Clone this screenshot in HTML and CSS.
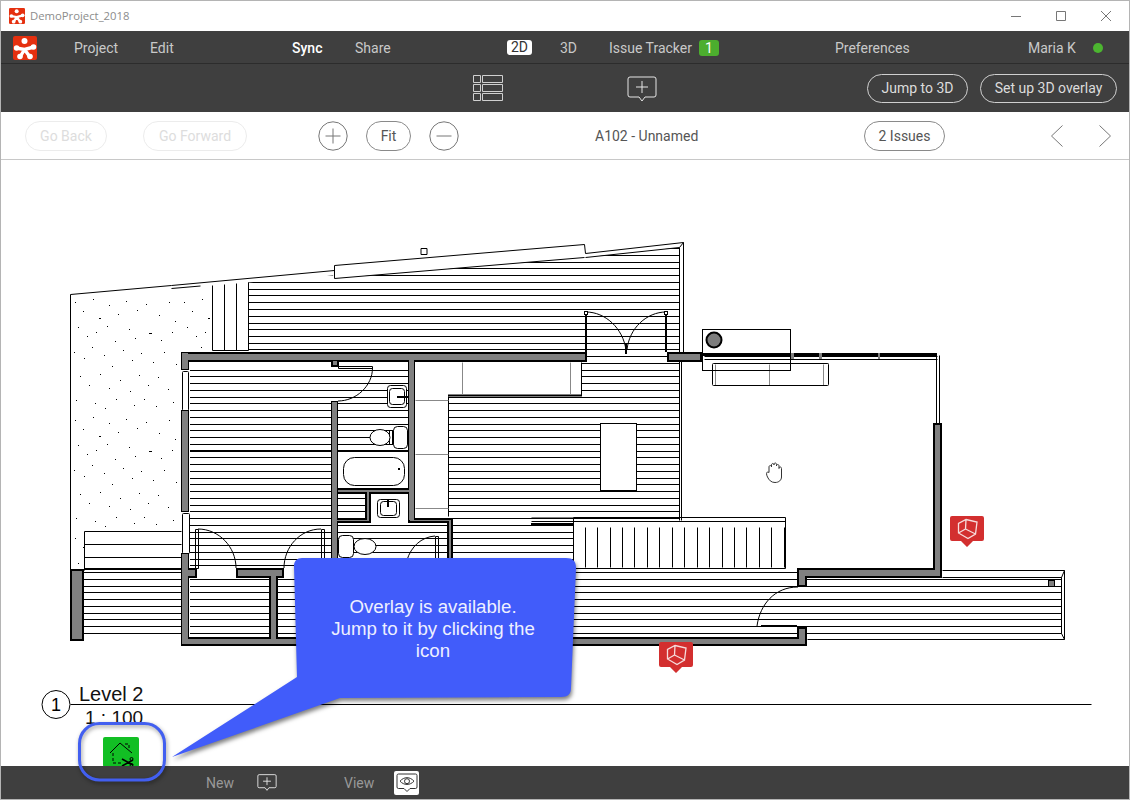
FILE: index.html
```html
<!DOCTYPE html>
<html lang="en">
<head>
<meta charset="utf-8">
<title>DemoProject_2018</title>
<link rel="stylesheet" href="styles.css">
</head>
<body>
<svg class="defs" width="0" height="0" aria-hidden="true">
  <defs>
    <symbol id="logo" viewBox="0 0 24 24">
      <rect width="24" height="24" rx="2" class="logo-bg"/>
      <circle cx="11.5" cy="5" r="3" class="logo-fg"/>
      <path d="M3 12 L11.5 13.5 L21 11 M11.5 13.5 L7 21 M11.5 13.5 L17 21" class="logo-limb"/>
      <circle cx="3.6" cy="12" r="2.8" class="logo-fg"/>
      <circle cx="20.5" cy="11" r="2.8" class="logo-fg"/>
      <circle cx="7" cy="20.5" r="2.8" class="logo-fg"/>
      <circle cx="17" cy="20.5" r="2.8" class="logo-fg"/>
    </symbol>
    <symbol id="comment" viewBox="0 0 30 26">
      <path d="M3 1H27a2 2 0 0 1 2 2V19a2 2 0 0 1-2 2H18l-3 4-3-4H3a2 2 0 0 1-2-2V3a2 2 0 0 1 2-2z"/>
      <path d="M15 5v12M9 11h12"/>
    </symbol>
    <symbol id="marker" viewBox="0 0 34 31">
      <path d="M2 0H32a2 2 0 0 1 2 2V23a2 2 0 0 1-2 2H23l-6 6-6-6H2a2 2 0 0 1-2-2V2a2 2 0 0 1 2-2z" class="marker-bg"/>
      <path d="M16 3.5L27 6 25.5 18 18 22.5 8.5 17V7.5zM15.5 13L16 3.5M15.5 13L8.5 17M15.5 13L25.5 18" class="marker-cube"/>
    </symbol>
    <pattern id="stipple" x="71" y="296" width="109" height="118" patternUnits="userSpaceOnUse">
      <path class="dots" d="M4 6.5h1M12 15.5h1M22 3.5h1M28 22.5h2M38 9.5h1M47 18.5h1M55 5.5h1M66 14.5h1M75 8.5h1M88 19.5h1M98 6.5h1M104 25.5h1M7 31.5h1M16 40.5h1M25 36.5h1M36 30.5h1M44 45.5h1M58 33.5h1M64 42.5h1M78 37.5h3M90 44.5h1M101 36.5h1M3 56.5h1M13 62.5h1M21 51.5h1M33 59.5h1M41 70.5h1M52 54.5h1M61 64.5h1M70 57.5h1M82 66.5h1M93 56.5h1M105 68.5h1M9 80.5h1M18 89.5h1M29 78.5h1M38 92.5h1M49 84.5h1M59 95.5h1M68 79.5h1M77 89.5h1M87 81.5h1M97 93.5h1M5 104.5h1M24 107.5h1M34 112.5h1M45 103.5h1M63 109.5h1M73 103.5h1M85 110.5h1M102 106.5h1"/>
    </pattern>
    <clipPath id="stipple-area">
      <polygon points="72,296 170,288 210,287 210,352 180,352 180,531 84,531 84,569 72,569"/>
    </clipPath>
    <clipPath id="hatch-area">
      <polygon points="248,282 333,275 335,278 584,257 585,257 679,247 679,362 248,352"/>
      <rect x="190" y="369" width="218" height="82"/>
      <rect x="190" y="451" width="141" height="118"/>
      <rect x="338" y="494" width="28" height="24"/>
      <rect x="338" y="522" width="110" height="48"/>
      <rect x="190" y="578" width="80" height="60"/>
      <rect x="278" y="578" width="80" height="60"/>
      <rect x="84" y="571" width="97" height="66"/>
      <rect x="581" y="360" width="98" height="36"/>
      <rect x="448" y="396" width="231" height="124"/>
      <rect x="452" y="520" width="121" height="118"/>
      <rect x="573" y="568" width="225" height="70"/>
      <rect x="798" y="587" width="9" height="42"/>
      <rect x="807" y="578" width="254" height="56"/>
    </clipPath>
    <path id="hatch-lines" d="M0 248H1130M0 255H1130M0 262H1130M0 268H1130M0 275H1130M0 282H1130M0 289H1130M0 295H1130M0 302H1130M0 309H1130M0 316H1130M0 323H1130M0 329H1130M0 336H1130M0 343H1130M0 349H1130M0 356H1130M0 363H1130M0 370H1130M0 376H1130M0 383H1130M0 390H1130M0 397H1130M0 403H1130M0 410H1130M0 417H1130M0 424H1130M0 430H1130M0 437H1130M0 444H1130M0 451H1130M0 457H1130M0 464H1130M0 471H1130M0 478H1130M0 484H1130M0 491H1130M0 498H1130M0 505H1130M0 511H1130M0 518H1130M0 525H1130M0 532H1130M0 538H1130M0 545H1130M0 552H1130M0 559H1130M0 565H1130M0 572H1130M0 579H1130M0 586H1130M0 592H1130M0 599H1130M0 606H1130M0 613H1130M0 619H1130M0 626H1130M0 633H1130"/>
    <g id="walls">
      <rect x="183" y="354" width="402" height="6"/>
      <rect x="333" y="361" width="4" height="4"/>
      <rect x="183" y="639" width="622" height="5"/>
      <rect x="799" y="629" width="6" height="15"/>
      <rect x="238" y="570" width="44" height="6"/>
      <rect x="188" y="570" width="7" height="6"/>
      <rect x="271" y="576" width="5" height="63"/>
      <rect x="338" y="490" width="72" height="2"/>
      <rect x="367" y="490" width="2" height="30"/>
      <rect x="334" y="520" width="35" height="1"/>
      <rect x="410" y="520" width="40" height="1"/>
      <rect x="449" y="520" width="2" height="50"/>
      <rect x="72" y="571" width="10" height="68"/>
      <rect x="669" y="354" width="31" height="6"/>
      <rect x="935" y="425" width="5" height="149"/>
      <rect x="799" y="570" width="141" height="6"/>
      <rect x="799" y="570" width="6" height="15"/>
    </g>
    <g id="walls-slim">
      <rect x="182" y="353" width="6" height="16"/>
      <rect x="182" y="411" width="6" height="100"/>
      <rect x="182" y="554" width="6" height="90"/>
      <rect x="332" y="402" width="5" height="171"/>
      <rect x="409" y="360" width="5" height="160"/>
    </g>
  </defs>
</svg>

<div class="window">
  <header class="titlebar">
    <svg class="title-logo"><use href="#logo"/></svg>
    <span class="title-text">DemoProject_2018</span>
    <div class="win-controls">
      <svg class="win-icon" viewBox="0 0 10 10"><path d="M0 5.5H10"/></svg>
      <svg class="win-icon" viewBox="0 0 10 10"><path d="M.5 .5H9.5V9.5H.5z"/></svg>
      <svg class="win-icon" viewBox="0 0 10 10"><path d="M0 0L10 10M10 0L0 10"/></svg>
    </div>
  </header>

  <nav class="navbar">
    <svg class="nav-logo"><use href="#logo"/></svg>
    <span>Project</span>
    <span>Edit</span>
    <span class="nav-active">Sync</span>
    <span>Share</span>
    <span class="pill">2D</span>
    <span>3D</span>
    <span class="issue-link">Issue Tracker <b class="badge">1</b></span>
    <span>Preferences</span>
    <span class="user">Maria K <i class="status-dot"></i></span>
  </nav>

  <div class="toolbar">
    <svg class="list-icon" viewBox="0 0 30 26">
      <path d="M.5 .5h7v7h-7zM9.5 .5h20v7h-20zM.5 9.5h7v7h-7zM9.5 9.5h20v7h-20zM.5 18.5h7v7h-7zM9.5 18.5h20v7h-20z"/>
    </svg>
    <svg class="comment-icon"><use href="#comment"/></svg>
    <button class="pill-btn dark jump">Jump to 3D</button>
    <button class="pill-btn dark overlay">Set up 3D overlay</button>
  </div>

  <div class="subbar">
    <button class="pill-btn ghost back">Go Back</button>
    <button class="pill-btn ghost forward">Go Forward</button>
    <svg class="round-icon" viewBox="0 0 30 30"><circle cx="15" cy="15" r="14.2"/><path d="M15 7.500v15M7.500 15h15"/></svg>
    <button class="pill-btn light fit">Fit</button>
    <svg class="round-icon" viewBox="0 0 30 30"><circle cx="15" cy="15" r="14.2"/><path d="M7.500 15h15"/></svg>
    <span class="sheet-name">A102 - Unnamed</span>
    <button class="pill-btn light issues">2 Issues</button>
    <svg class="chev" viewBox="0 0 12 22"><path d="M11.5 .5L.5 11l11 10.500"/></svg>
    <svg class="chev" viewBox="0 0 12 22"><path d="M.5 .5L11.500 11 .5 21.500"/></svg>
  </div>

  <main class="canvas">
    <svg class="plan" viewBox="1 160 1128 606">
      <rect x="72" y="296" width="140" height="274" fill="url(#stipple)" clip-path="url(#stipple-area)"/>
      <g class="crisp-y" clip-path="url(#hatch-area)"><use href="#hatch-lines" class="ln"/></g>

      <g class="ln half">
        <path d="M70 294L171 285L334 270M171 288L200 285.500M334 265L584 244 585 253 683 242M334 265V278L584 257M585 257L679 247M683 242L679 247M683 242V353M70 294V570"/>
        <path d="M420.500 248h6v6h-6z"/>
        <path d="M212 285V350M224 284V350M236 283V350M248 282V350M212 350H248"/>
        <path d="M84 531V570M84 531H181M84 544H181M84 557H181"/>
        <path d="M679 247V520M681 360V520"/>
        <path d="M581 362V396M448 396V516"/>
        <path d="M531 517.500H573M573 517H785M531 521H785M573 517V568M573 568H785M785 517V568"/>
        <path d="M585 527V567M597 527V567M610 527V567M622 527V567M634 527V567M647 527V567M659 527V567M672 527V567M684 527V567M697 527V567M709 527V567M722 527V567M734 527V567M746 527V567M759 527V567M771 527V567M784 527V567"/>
        <path d="M942 570H1064V639H807M942 577H1061V633H807M1064 570L1061 577M1064 639L1061 633M1061 577V633"/>
        <path d="M491 354V361M544 354V361"/>
        <path d="M704 359H937M704 356H937M936 355V424M939 355V424"/>
      </g>
      <path class="ln thick" d="M448 395.500H581M531 524H573M84 569H181M338 451H408M190 451H331M761 626H797M582 353H585"/>
      <path class="ln thick" d="M586 314V352M666 314V352M626 343V354"/>
      <path class="ln-wide" d="M702 354.500H937"/>

      <g class="ln half grey-lines">
        <path d="M462 362V394M570 362V394M415 400H448M415 454H448M415 508H448"/>
        <path d="M715 364V385M769 364V385M823 364V385M791 363H828"/>
      </g>

      <rect class="box half-r" x="600.500" y="423.500" width="36" height="67"/>

      <g class="arc">
        <path d="M338.500 366.500H372.500V368.500H338.500z"/>
        <path d="M372.500 368C372.500 386 356 401 338 401"/>
        <path d="M198 529C219 529 236 547 236 568"/>
        <path d="M321 529C300 529 284 547 284 568"/>
        <path d="M195.500 529.500h3v39h-3zM321.500 529.500h3v39h-3zM435.500 536.500h3v30h-3z"/>
        <path d="M435 536C421 537 411 547 407 560"/>
        <path d="M586 312C605 312 623 328 626 350M666 312C647 312 629 328 627 350"/>
        <path d="M798 587C775 587 760 604 757 626"/>
      </g>

      <g class="fixture">
        <rect x="584.500" y="311.500" width="3" height="3"/>
        <rect x="664.500" y="311.500" width="3" height="3"/>
        <rect x="387.500" y="385.500" width="19" height="22" rx="3"/>
        <rect x="389.500" y="388.500" width="15" height="16" rx="3"/>
        <rect x="393.500" y="426.500" width="14" height="22" rx="4"/>
        <rect x="389.500" y="430.500" width="3" height="14"/>
        <ellipse cx="380" cy="437.500" rx="10" ry="8"/>
        <rect x="343.500" y="457.500" width="61" height="28" rx="11"/>
        <rect x="377.500" y="499.500" width="22" height="18" rx="3"/>
        <rect x="380.500" y="501.500" width="16" height="14" rx="3"/>
        <rect x="338.500" y="535.500" width="15" height="22" rx="4"/>
        <ellipse cx="365" cy="546.500" rx="11" ry="8"/>
        <rect x="182.500" y="371.500" width="6" height="39" rx="1"/>
        <rect x="182.500" y="513.500" width="7" height="40" rx="1"/>
      </g>
      <path class="ln thick" d="M397 397H408M388 499V507M398 469h2"/>

      <g class="fireplace">
        <rect class="box-clear" x="702.500" y="329.500" width="88" height="41"/>
        <rect class="box-clear" x="712.500" y="363.500" width="116" height="22" rx="1"/>
        <circle class="hearth" cx="714" cy="340" r="7.500"/>
      </g>

      <use href="#walls" class="wall-edge"/>
      <use href="#walls-slim" class="wall-edge-slim"/>
      <use href="#walls" class="wall-fill"/>
      <use href="#walls-slim" class="wall-fill"/>
      <rect class="small-post" x="1048.500" y="580.500" width="6" height="6"/>
      <path class="ln-wide" d="M702 354.500H790"/>
      <rect class="joint" x="791" y="353" width="3" height="6"/>
      <rect class="joint" x="819" y="353" width="3" height="6"/>
      <rect class="joint" x="878" y="353" width="2" height="6"/>

      <path class="hand" d="M767.500 477C765.500 473 767 471 769 472.500V467C769 465 771.500 465 771.500 467V465C771.500 463 774 463 774 465V464.500C774 462.500 776.500 462.500 776.500 464.500V466C776.500 464 779 464 779 466V468.500C779 466.500 781.500 466.500 781.500 468.500V477C781.500 480 779 482.500 775 482.500C771 482.500 769 480 767.500 477Z"/>

      <svg x="950" y="516" width="34" height="31"><use href="#marker"/></svg>
      <svg x="659" y="642" width="34" height="31"><use href="#marker"/></svg>

      <circle class="scale-circle" cx="56" cy="704.500" r="14"/>
      <path class="ln half" d="M70 704H1091"/>
      <text class="scale-no" x="56" y="711">1</text>
      <text class="scale-title" x="79" y="701">Level 2</text>
      <text class="scale-sub" x="85" y="724">1 : 100</text>

      <rect class="green-tile" x="103" y="737" width="36" height="30" rx="2"/>
      <g class="house">
        <path d="M110 753L120 743 132 753"/>
        <path d="M113 753V763H122" class="dash"/>
        <path d="M125 744H129V749" class="dash"/>
        <path d="M122 759L133 765M122 766L133 760" class="thick-black"/>
        <circle cx="131.500" cy="759" r="1.500"/>
        <circle cx="131.500" cy="765" r="1.500"/>
      </g>
    </svg>
  </main>

  <footer class="bottombar">
    <span>New</span>
    <svg class="mini-comment"><use href="#comment"/></svg>
    <span>View</span>
    <span class="view-btn">
      <svg class="eye" viewBox="0 0 22 20">
        <path d="M2.500 1H19.500a1.500 1.500 0 0 1 1.500 1.500V14a1.500 1.500 0 0 1-1.500 1.500H14l-3 3-3-3H2.500A1.500 1.500 0 0 1 1 14V2.500A1.500 1.500 0 0 1 2.500 1z"/>
        <path d="M4 8.200C8 3.500 14 3.500 18 8.200 14 12.500 8 12.500 4 8.200z"/>
        <circle cx="11" cy="8.200" r="2.500"/>
      </svg>
    </span>
  </footer>

  <svg class="annotation" viewBox="0 0 1130 800">
    <rect class="ring" x="79.500" y="723.500" width="85" height="56.500" rx="20"/>
    <path class="callout" d="M302 558H566C573 558 576 561 576 568L571 688C571 694 568 697 561 697L340 698 172 757 297 677 294 566C294 561 297 558 302 558Z"/>
    <text class="callout-text" x="433" y="613">Overlay is available.</text>
    <text class="callout-text" x="433" y="635">Jump to it by clicking the</text>
    <text class="callout-text" x="433" y="657">icon</text>
  </svg>
</div>
</body>
</html>
```

FILE: styles.css
```css
* { box-sizing: border-box; }
html, body { margin: 0; padding: 0; background: #fff; }
body { width: 1130px; height: 800px; overflow: hidden; font-family: Roboto, "Liberation Sans", sans-serif; }
.defs { position: absolute; }

.window {
  position: relative;
  width: 1130px;
  height: 800px;
  border: 1px solid #b4b4b4;
  display: flex;
  flex-direction: column;
  background: #fff;
}

/* Title bar */
.titlebar { height: 30px; flex: none; display: flex; align-items: center; padding-left: 8px; padding-right: 18px; }
.title-logo { width: 16px; height: 16px; }
.title-text { margin-left: 5px; margin-top: -2px; font: 11.3px "Open Sans", sans-serif; color: #8c8c8c; }
.win-controls { margin-left: auto; display: flex; gap: 35px; }
.win-icon { width: 10px; height: 10px; fill: none; stroke: #777; stroke-width: 1; }

.logo-bg { fill: #e5300f; }
.logo-fg { fill: #fff; }
.logo-limb { fill: none; stroke: #fff; stroke-width: 3.400; }

/* Nav */
.navbar {
  height: 33px;
  flex: none;
  padding-top: 1px;
  background: #3f3f3f;
  border-bottom: 1px solid #2c2c2c;
  display: grid;
  grid-template-columns: 73px 76px 142px 63px 152px 53px 49px 226px 193px 1fr;
  align-items: center;
  color: #c9c9c9;
  font-size: 14px;
}
.nav-logo { width: 24px; height: 24px; margin-left: 12px; display: block; }
.nav-active { color: #fff; font-weight: 500; }
.pill { width: 25px; height: 15px; line-height: 15px; background: #fff; color: #333; border-radius: 3px; text-align: center; }
.issue-link { display: flex; align-items: center; gap: 7px; white-space: nowrap; }
.badge { width: 20px; height: 16px; line-height: 16px; border-radius: 3px; background: #4cae2e; color: #fff; font-weight: 400; text-align: center; }
.user { display: flex; align-items: center; gap: 17px; white-space: nowrap; }
.status-dot { width: 10px; height: 10px; border-radius: 50%; background: #4cb530; }

/* Toolbar */
.toolbar {
  height: 48px;
  flex: none;
  background: #3f3f3f;
  padding-left: 472px;
  display: grid;
  grid-template-columns: 154px 240px 113px 1fr;
  align-items: center;
}
.list-icon { width: 30px; height: 26px; fill: none; stroke: #d0d0d0; stroke-width: 1; }
.comment-icon { width: 30px; height: 26px; margin-top: 2px; fill: none; stroke: #e6e6e6; stroke-width: 1; }

.pill-btn {
  height: 30px;
  padding: 0;
  border-radius: 15px;
  font: 14px Roboto, sans-serif;
  background: transparent;
  border: 1px solid #888;
}
.pill-btn.dark { border-color: #cfcfcf; color: #dcdcdc; height: 29px; }
.pill-btn.ghost { border-color: #ececec; color: #dddddd; }
.pill-btn.light { border-color: #8a8a8a; color: #555; }
.jump { width: 101px; }
.overlay { width: 137px; }
.back { width: 82px; }
.forward { width: 104px; }
.fit { width: 45px; }
.issues { width: 81px; }

/* Sub bar */
.subbar {
  height: 48px;
  flex: none;
  border-bottom: 1px solid #c8c8c8;
  padding-left: 24px;
  display: grid;
  grid-template-columns: 118px 175px 48px 63px 166px 269px 187px 48px 1fr;
  align-items: center;
  color: #555;
  font-size: 14px;
}
.round-icon { width: 30px; height: 30px; fill: none; stroke: #777; stroke-width: 1; }
.sheet-name { white-space: nowrap; }
.chev { width: 12px; height: 22px; fill: none; stroke: #777; stroke-width: 1; }

/* Canvas */
.canvas { flex: 1; min-height: 0; overflow: hidden; background: #fff; }
.plan { display: block; width: 1128px; height: 606px; }
.dots { fill: none; stroke: #000; stroke-width: 1; }
.crisp-y { transform: translateY(.5px); }
.ln { fill: none; stroke: #000; stroke-width: 1; }
.ln.half { transform: translate(.5px, .5px); }
.ln.thick { stroke-width: 2; }
.ln-wide { fill: none; stroke: #000; stroke-width: 3; }
.grey-lines { stroke: #888; }
.box { fill: #fff; stroke: #000; stroke-width: 1; }
.arc { fill: none; stroke: #000; stroke-width: 1; }
.fixture { fill: #fff; stroke: #000; stroke-width: 1; }
.box-clear { fill: none; stroke: #000; stroke-width: 1; }
.hearth { fill: #7d7d7d; stroke: #000; stroke-width: 2; }
.wall-edge { fill: #000; stroke: #000; stroke-width: 4; }
.wall-edge-slim { fill: #000; stroke: #000; stroke-width: 2; }
.wall-fill { fill: #808080; }
.small-post { fill: #808080; stroke: #000; stroke-width: 1; }
.joint { fill: #808080; }
.hand { fill: #fff; stroke: #333; stroke-width: 1; }
.marker-bg { fill: #d32f2f; }
.marker-cube { fill: none; stroke: #f6dcdc; stroke-width: 1.300; }
.scale-circle { fill: #fff; stroke: #000; stroke-width: 1; }
.scale-no { font: 18px "Liberation Sans", sans-serif; text-anchor: middle; }
.scale-title { font: 20px "Liberation Sans", sans-serif; fill: #111; }
.scale-sub { font: 19px "Liberation Sans", sans-serif; fill: #111; }
.green-tile { fill: #12bf24; }
.house { fill: none; stroke: #000; stroke-width: 1; }
.dash { stroke-dasharray: 3 2; }
.thick-black { stroke-width: 1.600; }

/* Bottom bar */
.bottombar {
  height: 33px;
  flex: none;
  background: #3f3f3f;
  padding-left: 205px;
  display: grid;
  grid-template-columns: 51px 87px 50px 25px;
  align-items: center;
  color: #999;
  font-size: 14px;
}
.mini-comment { width: 20px; height: 17px; fill: none; stroke: #e6e6e6; stroke-width: 1.400; }
.view-btn { width: 25px; height: 24px; background: #fff; border-radius: 2px; display: flex; align-items: center; justify-content: center; }
.eye { width: 22px; height: 20px; fill: none; stroke: #333; stroke-width: 1; }

/* Annotation overlay */
.annotation { position: absolute; left: -1px; top: -1px; width: 1130px; height: 800px; pointer-events: none; }
.ring { fill: none; stroke: #425ff0; stroke-width: 3; filter: drop-shadow(1px 2px 2px rgba(0,0,0,.4)); }
.callout { fill: #415cfa; filter: drop-shadow(1px 3px 2px rgba(0,0,0,.5)); }
.callout-text { font: 18.7px "Liberation Sans", sans-serif; fill: #eef0ff; text-anchor: middle; }
```
